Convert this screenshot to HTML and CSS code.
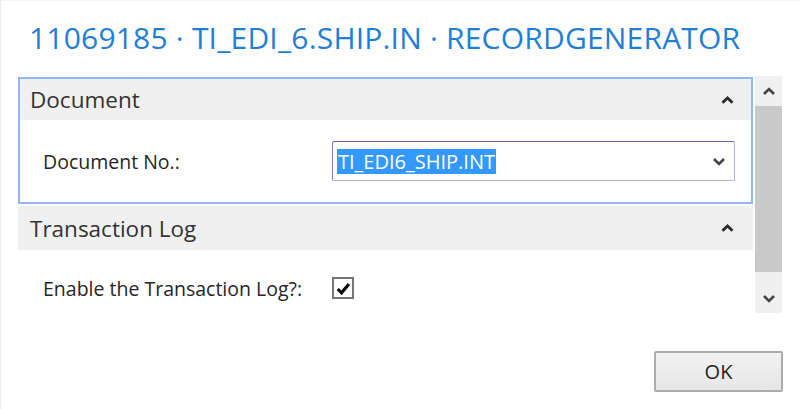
FILE: index.html
```html
<!DOCTYPE html>
<html>
<head>
<meta charset="utf-8">
<link rel="stylesheet" href="styles.css">
</head>
<body>
<div class="window">
  <h1 class="title">11069185 · TI_EDI_6.SHIP.IN · RECORDGENERATOR</h1>
  <div class="content">
    <div class="panel">
      <section class="group focused">
        <div class="group-head">
          <span class="group-title">Document</span>
          <svg class="chev" width="13" height="8" viewBox="0 0 13 8"><polyline points="1.5,6.8 6.5,2 11.5,6.8" fill="none" stroke="#2b2b2b" stroke-width="2.8"/></svg>
        </div>
        <div class="group-body doc-body">
          <label class="field-label">Document No.:</label>
          <div class="combo">
            <span class="sel">TI_EDI6_SHIP.INT</span>
            <svg class="chev" width="14" height="9" viewBox="0 0 14 9"><polyline points="2,2 7,7 12,2" fill="none" stroke="#444" stroke-width="2.6"/></svg>
          </div>
        </div>
      </section>
      <section class="group">
        <div class="group-head">
          <span class="group-title">Transaction Log</span>
          <svg class="chev" width="13" height="8" viewBox="0 0 13 8"><polyline points="1.5,6.8 6.5,2 11.5,6.8" fill="none" stroke="#2b2b2b" stroke-width="2.8"/></svg>
        </div>
        <div class="group-body log-body">
          <label class="field-label">Enable the Transaction Log?:</label>
          <span class="check">
            <svg width="15" height="13" viewBox="0 0 15 13"><polyline points="1.8,7 5.5,10.8 13,2" fill="none" stroke="#000" stroke-width="3.2"/></svg>
          </span>
        </div>
      </section>
    </div>
    <div class="scrollbar">
      <div class="sb-btn">
        <svg width="14" height="9" viewBox="0 0 14 9"><polyline points="2,7 7,2 12,7" fill="none" stroke="#444" stroke-width="2.6"/></svg>
      </div>
      <div class="sb-thumb"></div>
      <div class="sb-track"></div>
      <div class="sb-btn">
        <svg width="14" height="9" viewBox="0 0 14 9"><polyline points="2,2 7,7 12,2" fill="none" stroke="#444" stroke-width="2.6"/></svg>
      </div>
    </div>
  </div>
  <div class="actions">
    <button class="ok">OK</button>
  </div>
</div>
</body>
</html>
```

FILE: styles.css
```css
html, body {
  margin: 0;
  padding: 0;
  background: #ffffff;
}
body {
  font-family: "Open Sans", "Noto Sans", sans-serif;
  color: #2b2b2b;
}
.window {
  width: 800px;
  height: 409px;
  box-sizing: border-box;
  border-left: 1px solid #ececec;
  border-top: 1px solid #f4f4f4;
}
.title {
  margin: 0;
  padding: 17px 0 0 28px;
  height: 41px;
  font-weight: 400;
  font-size: 30px;
  line-height: 40px;
  letter-spacing: 0.2px;
  color: #1f7ed6;
  white-space: nowrap;
}
.content {
  display: flex;
  align-items: flex-start;
  margin: 18px 0 0 17px;
}
.panel {
  width: 735px;
  height: 236px;
}
.group-head {
  display: flex;
  align-items: center;
  justify-content: space-between;
  height: 44px;
  background: #f0f0f0;
  padding: 0 19px 0 12px;
}
.group-title {
  font-size: 22.5px;
  color: #333;
}
.group.focused {
  border: 2px solid #8fb8f6;
}
.group.focused .group-head {
  height: 41px;
  padding: 0 17px 0 10px;
}
.group.focused + .group {
  margin-top: 2px;
}
.doc-body {
  display: flex;
  align-items: center;
  height: 82px;
  padding-left: 23px;
}
.field-label {
  font-size: 19.5px;
  color: #262626;
  width: 289px;
}
.combo {
  box-sizing: border-box;
  width: 403px;
  height: 40px;
  border: 1px solid #b5aed8;
  border-top-color: #6f66ae;
  border-left-color: #7f77b8;
  border-radius: 2px;
  display: flex;
  align-items: center;
  justify-content: space-between;
  padding: 0 8px 0 4px;
}
.sel {
  background: #3399ff;
  color: #fff;
  font-size: 20px;
  line-height: 25px;
  padding: 0 1px;
}
.log-body {
  display: flex;
  align-items: center;
  height: 76px;
  padding-left: 25px;
}
.check {
  box-sizing: border-box;
  width: 22px;
  height: 22px;
  border: 2px solid #777;
  display: flex;
  align-items: center;
  justify-content: center;
}
.scrollbar {
  margin-left: 2px;
  width: 27px;
  height: 237px;
  margin-top: -1px;
  background: #f0f0f0;
  display: flex;
  flex-direction: column;
}
.sb-btn {
  height: 30px;
  display: flex;
  align-items: center;
  justify-content: center;
}
.sb-thumb {
  height: 166px;
  background: #c9c9c9;
}
.sb-track {
  flex: 1;
}
.actions {
  display: flex;
  justify-content: flex-end;
  margin-top: 38px;
  padding-right: 17px;
}
.ok {
  width: 129px;
  height: 41px;
  border: 2px solid #acacac;
  border-radius: 2px;
  background: linear-gradient(#f2f2f2, #e6e6e6);
  font-family: "Open Sans", "Noto Sans", sans-serif;
  font-size: 20px;
  color: #222;
  padding: 0;
}
```
